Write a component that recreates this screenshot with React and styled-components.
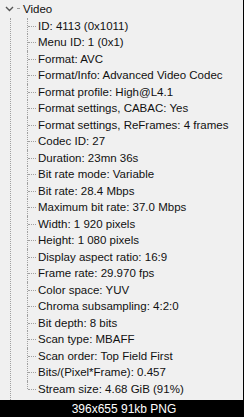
import React from "react";
import styled, { createGlobalStyle } from "styled-components";

const GlobalStyle = createGlobalStyle`
    html, body {
        margin: 0;
        padding: 0;
        background: #000;
    }
`;

const Frame = styled.div`
    width: 244px;
    height: 417px;
    display: flex;
    flex-direction: column;
    background: #000;
    font-family: "Liberation Sans", Arial, sans-serif;
`;

const Panel = styled.div`
    width: 243px;
    height: 400px;
    background: #f0f0f0;
    overflow: hidden;
    padding-top: 1px;
    box-sizing: border-box;
`;

const Header = styled.div`
    height: 16.5px;
    display: flex;
    align-items: center;
    font-size: 11.5px;
    color: #111;
`;

const Chevron = styled.svg`
    width: 9px;
    height: 6px;
    margin-left: 5px;
    flex: none;
`;

const Dot = styled.span`
    width: 2px;
    height: 1px;
    margin: 0 4px 0 3px;
    border-top: 1px dotted #a0a0a0;
    align-self: center;
`;

const Branch = styled.div`
    margin-left: 10px;
    border-left: 1px dotted #a0a0a0;
    min-height: 400px;
`;

const List = styled.ul`
    list-style: none;
    margin: 0 0 0 16px;
    padding: 0;
`;

const Item = styled.li`
    position: relative;
    height: 16.5px;
    line-height: 16.5px;
    padding-left: 11px;
    font-size: 11.5px;
    color: #111;
    white-space: nowrap;

    &::before {
        content: "";
        position: absolute;
        left: 0;
        top: 0;
        height: ${(p) => (p.$last ? "8px" : "100%")};
        border-left: 1px dotted #a0a0a0;
    }

    &::after {
        content: "";
        position: absolute;
        left: 1px;
        top: 8px;
        width: 8px;
        border-top: 1px dotted #a0a0a0;
    }
`;

const Footer = styled.div`
    height: 17px;
    display: flex;
    align-items: center;
    justify-content: center;
    color: #fff;
    font-size: 12px;
    padding-left: 4px;
`;

const fields = [
    "ID: 4113 (0x1011)",
    "Menu ID: 1 (0x1)",
    "Format: AVC",
    "Format/Info: Advanced Video Codec",
    "Format profile: High@L4.1",
    "Format settings, CABAC: Yes",
    "Format settings, ReFrames: 4 frames",
    "Codec ID: 27",
    "Duration: 23mn 36s",
    "Bit rate mode: Variable",
    "Bit rate: 28.4 Mbps",
    "Maximum bit rate: 37.0 Mbps",
    "Width: 1 920 pixels",
    "Height: 1 080 pixels",
    "Display aspect ratio: 16:9",
    "Frame rate: 29.970 fps",
    "Color space: YUV",
    "Chroma subsampling: 4:2:0",
    "Bit depth: 8 bits",
    "Scan type: MBAFF",
    "Scan order: Top Field First",
    "Bits/(Pixel*Frame): 0.457",
    "Stream size: 4.68 GiB (91%)",
];

export default function App() {
    return (
        <>
            <GlobalStyle />
            <Frame>
                <Panel>
                    <Header>
                        <Chevron viewBox="0 0 9 6">
                            <path d="M1 1 L4.5 4.5 L8 1" fill="none" stroke="#555" strokeWidth="1.4" />
                        </Chevron>
                        <Dot />
                        Video
                    </Header>
                    <Branch>
                        <List>
                            {fields.map((f, i) => (
                                <Item key={f} $last={i === fields.length - 1}>
                                    {f}
                                </Item>
                            ))}
                        </List>
                    </Branch>
                </Panel>
                <Footer>396x655 91kb PNG</Footer>
            </Frame>
        </>
    );
}
